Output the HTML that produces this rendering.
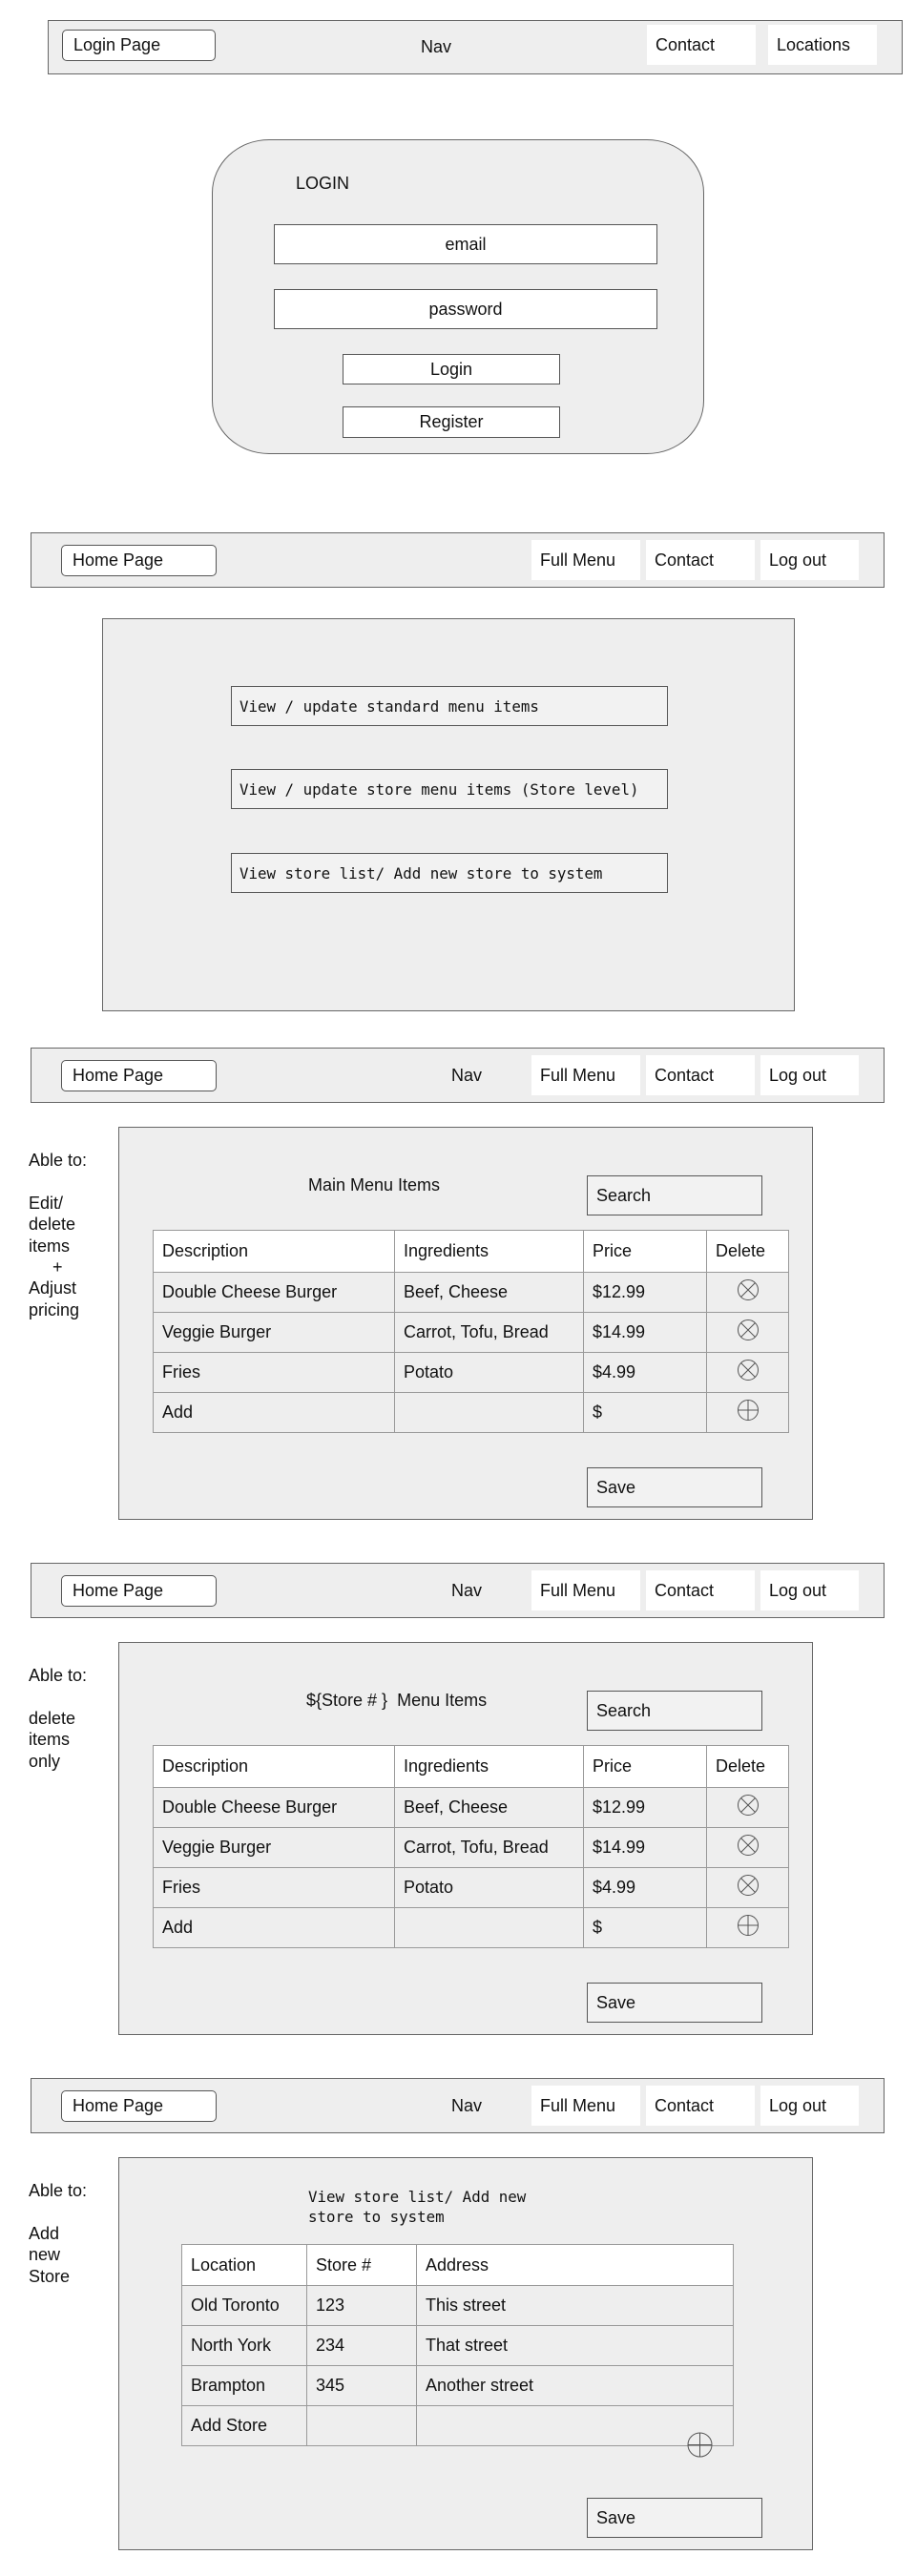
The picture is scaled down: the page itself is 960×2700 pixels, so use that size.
<!DOCTYPE html>
<html><head><meta charset="utf-8"><style>
*{box-sizing:border-box;margin:0;padding:0}
body{width:960px;height:2700px;background:#fff;position:relative;font-family:"Liberation Sans",Arial,sans-serif;font-size:18px;color:#111;overflow:hidden}
.a{position:absolute}
.nav{position:absolute;background:#eeeeee;border:1.5px solid #666}
.btn{position:absolute;background:#fff;border:1px solid #555;border-radius:5px;display:flex;align-items:center;padding-left:11px}
.ni{position:absolute;background:#fff;display:flex;align-items:center;padding-left:9px}
.box{position:absolute;border:1px solid #555;display:flex;align-items:center}
.panel{position:absolute;background:#eeeeee;border:1.5px solid #666}
.mono{font-family:"DejaVu Sans Mono","Liberation Mono",monospace;font-size:15.8px}
table{position:absolute;border-collapse:collapse;table-layout:fixed}
td{border:1px solid #999;padding-left:9px;font-size:18px;height:42px}
tr.h td{background:#fff}
tr.r td{background:#eeeeee}
.ic{text-align:center;padding:0}
.lt{background:#f2f2f2}
</style></head><body>

<!-- Section 1 -->
<div class="nav" style="left:50px;top:21px;width:896px;height:57px"></div>
<div class="btn" style="left:65px;top:31px;width:161px;height:33px">Login Page</div>
<div class="a" style="left:441px;top:39px">Nav</div>
<div class="ni" style="left:678px;top:26px;width:114px;height:42px">Contact</div>
<div class="ni" style="left:805px;top:26px;width:114px;height:42px">Locations</div>

<div class="a" style="left:222px;top:146px;width:516px;height:330px;background:#eeeeee;border:1.5px solid #666;border-radius:60px/56px"></div>
<div class="a" style="left:310px;top:182px">LOGIN</div>
<div class="box" style="left:287px;top:235px;width:402px;height:42px;background:#fff;justify-content:center">email</div>
<div class="box" style="left:287px;top:303px;width:402px;height:42px;background:#fff;justify-content:center">password</div>
<div class="box" style="left:359px;top:371px;width:228px;height:32px;background:#fff;justify-content:center">Login</div>
<div class="box" style="left:359px;top:426px;width:228px;height:33px;background:#fff;justify-content:center">Register</div>

<!-- Section 2 -->
<div class="nav" style="left:32px;top:558px;width:895px;height:58px"></div>
<div class="btn" style="left:64px;top:571px;width:163px;height:33px">Home Page</div>
<div class="ni" style="left:557px;top:566px;width:114px;height:42px">Full Menu</div>
<div class="ni" style="left:677px;top:566px;width:114px;height:42px">Contact</div>
<div class="ni" style="left:797px;top:566px;width:103px;height:42px">Log out</div>
<div class="panel" style="left:107px;top:648px;width:726px;height:412px"></div>
<div class="box mono lt" style="left:242px;top:719px;width:458px;height:42px;padding-left:8px">View / update standard menu items</div>
<div class="box mono lt" style="left:242px;top:806px;width:458px;height:42px;padding-left:8px">View / update store menu items (Store level)</div>
<div class="box mono lt" style="left:242px;top:894px;width:458px;height:42px;padding-left:8px">View store list/ Add new store to system</div>

<!-- Section 3 -->
<div class="nav" style="left:32px;top:1098px;width:895px;height:58px"></div>
<div class="btn" style="left:64px;top:1111px;width:163px;height:33px">Home Page</div>
<div class="a" style="left:473px;top:1117px">Nav</div>
<div class="ni" style="left:557px;top:1106px;width:114px;height:42px">Full Menu</div>
<div class="ni" style="left:677px;top:1106px;width:114px;height:42px">Contact</div>
<div class="ni" style="left:797px;top:1106px;width:103px;height:42px">Log out</div>
<div class="a" style="left:30px;top:1205px;line-height:22.4px">Able to:<br><br>Edit/<br>delete<br>items<br>&nbsp;&nbsp;&nbsp;&nbsp;&nbsp;+<br>Adjust<br>pricing</div>
<div class="panel" style="left:124px;top:1181px;width:728px;height:412px"></div>
<div class="a" style="left:323px;top:1232px">Main Menu Items</div>
<div class="box lt" style="left:615px;top:1232px;width:184px;height:42px;padding-left:9px">Search</div>
<table style="left:160px;top:1289px;width:667px">
<colgroup><col style="width:253px"><col style="width:198px"><col style="width:129px"><col></colgroup>
<tr class="h"><td style="height:44px">Description</td><td>Ingredients</td><td>Price</td><td>Delete</td></tr>
<tr class="r"><td>Double Cheese Burger</td><td>Beef, Cheese</td><td>$12.99</td><td class="ic"><svg width="24" height="24" viewBox="0 0 24 24"><circle cx="12" cy="12" r="10.5" fill="none" stroke="#555"/><path d="M4.6 4.6L19.4 19.4M19.4 4.6L4.6 19.4" stroke="#555"/></svg></td></tr>
<tr class="r"><td>Veggie Burger</td><td>Carrot, Tofu, Bread</td><td>$14.99</td><td class="ic"><svg width="24" height="24" viewBox="0 0 24 24"><circle cx="12" cy="12" r="10.5" fill="none" stroke="#555"/><path d="M4.6 4.6L19.4 19.4M19.4 4.6L4.6 19.4" stroke="#555"/></svg></td></tr>
<tr class="r"><td>Fries</td><td>Potato</td><td>$4.99</td><td class="ic"><svg width="24" height="24" viewBox="0 0 24 24"><circle cx="12" cy="12" r="10.5" fill="none" stroke="#555"/><path d="M4.6 4.6L19.4 19.4M19.4 4.6L4.6 19.4" stroke="#555"/></svg></td></tr>
<tr class="r"><td>Add</td><td></td><td>$</td><td class="ic"><svg width="24" height="24" viewBox="0 0 24 24"><circle cx="12" cy="12" r="10.5" fill="none" stroke="#555"/><path d="M1.5 12H22.5M12 1.5V22.5" stroke="#555"/></svg></td></tr>
</table>
<div class="box lt" style="left:615px;top:1538px;width:184px;height:42px;padding-left:9px">Save</div>

<!-- Section 4 -->
<div class="nav" style="left:32px;top:1638px;width:895px;height:58px"></div>
<div class="btn" style="left:64px;top:1651px;width:163px;height:33px">Home Page</div>
<div class="a" style="left:473px;top:1657px">Nav</div>
<div class="ni" style="left:557px;top:1646px;width:114px;height:42px">Full Menu</div>
<div class="ni" style="left:677px;top:1646px;width:114px;height:42px">Contact</div>
<div class="ni" style="left:797px;top:1646px;width:103px;height:42px">Log out</div>
<div class="a" style="left:30px;top:1745px;line-height:22.4px">Able to:<br><br>delete<br>items<br>only</div>
<div class="panel" style="left:124px;top:1721px;width:728px;height:412px"></div>
<div class="a" style="left:321px;top:1772px;white-space:pre">${Store # }  Menu Items</div>
<div class="box lt" style="left:615px;top:1772px;width:184px;height:42px;padding-left:9px">Search</div>
<table style="left:160px;top:1829px;width:667px">
<colgroup><col style="width:253px"><col style="width:198px"><col style="width:129px"><col></colgroup>
<tr class="h"><td style="height:44px">Description</td><td>Ingredients</td><td>Price</td><td>Delete</td></tr>
<tr class="r"><td>Double Cheese Burger</td><td>Beef, Cheese</td><td>$12.99</td><td class="ic"><svg width="24" height="24" viewBox="0 0 24 24"><circle cx="12" cy="12" r="10.5" fill="none" stroke="#555"/><path d="M4.6 4.6L19.4 19.4M19.4 4.6L4.6 19.4" stroke="#555"/></svg></td></tr>
<tr class="r"><td>Veggie Burger</td><td>Carrot, Tofu, Bread</td><td>$14.99</td><td class="ic"><svg width="24" height="24" viewBox="0 0 24 24"><circle cx="12" cy="12" r="10.5" fill="none" stroke="#555"/><path d="M4.6 4.6L19.4 19.4M19.4 4.6L4.6 19.4" stroke="#555"/></svg></td></tr>
<tr class="r"><td>Fries</td><td>Potato</td><td>$4.99</td><td class="ic"><svg width="24" height="24" viewBox="0 0 24 24"><circle cx="12" cy="12" r="10.5" fill="none" stroke="#555"/><path d="M4.6 4.6L19.4 19.4M19.4 4.6L4.6 19.4" stroke="#555"/></svg></td></tr>
<tr class="r"><td>Add</td><td></td><td>$</td><td class="ic"><svg width="24" height="24" viewBox="0 0 24 24"><circle cx="12" cy="12" r="10.5" fill="none" stroke="#555"/><path d="M1.5 12H22.5M12 1.5V22.5" stroke="#555"/></svg></td></tr>
</table>
<div class="box lt" style="left:615px;top:2078px;width:184px;height:42px;padding-left:9px">Save</div>

<!-- Section 5 -->
<div class="nav" style="left:32px;top:2178px;width:895px;height:58px"></div>
<div class="btn" style="left:64px;top:2191px;width:163px;height:33px">Home Page</div>
<div class="a" style="left:473px;top:2197px">Nav</div>
<div class="ni" style="left:557px;top:2186px;width:114px;height:42px">Full Menu</div>
<div class="ni" style="left:677px;top:2186px;width:114px;height:42px">Contact</div>
<div class="ni" style="left:797px;top:2186px;width:103px;height:42px">Log out</div>
<div class="a" style="left:30px;top:2285px;line-height:22.4px">Able to:<br><br>Add<br>new<br>Store</div>
<div class="panel" style="left:124px;top:2261px;width:728px;height:412px"></div>
<div class="a mono" style="left:323px;top:2292px;line-height:21px">View store list/ Add new<br>store to system</div>
<table style="left:190px;top:2352px;width:579px">
<colgroup><col style="width:131px"><col style="width:115px"><col></colgroup>
<tr class="h"><td style="height:43px">Location</td><td>Store #</td><td>Address</td></tr>
<tr class="r"><td>Old Toronto</td><td>123</td><td>This street</td></tr>
<tr class="r"><td>North York</td><td>234</td><td>That street</td></tr>
<tr class="r"><td style="height:41px">Brampton</td><td>345</td><td>Another street</td></tr>
<tr class="r"><td>Add Store</td><td></td><td></td></tr>
</table>
<svg class="a" style="left:720px;top:2549px" width="27" height="27" viewBox="0 0 27 27"><circle cx="13.5" cy="13.5" r="12.5" fill="none" stroke="#555"/><path d="M1 13.5H26M13.5 1V26" stroke="#555"/></svg>
<div class="box lt" style="left:615px;top:2618px;width:184px;height:42px;padding-left:9px">Save</div>

</body></html>
